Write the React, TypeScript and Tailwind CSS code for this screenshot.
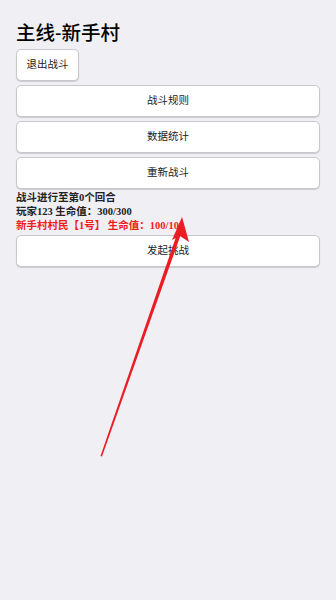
import React from "react";

const btn =
  "h-[32px] rounded-[5px] border border-[#c8c8cc] bg-white text-[10.5px] text-[#222] shadow-[0_1px_1px_rgba(0,0,0,0.15)]";

export default function App() {
  const font = { fontFamily: '"Liberation Serif", "Noto Sans CJK SC", serif' };
  return (
    <div className="relative min-h-[600px] w-full bg-[#efeff4] px-[16px] pt-[20px]" style={font}>
      <h1
        className="text-[19.5px] font-medium leading-[26px] text-black"
        style={{ fontFamily: '"Liberation Sans", "Noto Sans CJK SC", sans-serif' }}
      >
        主线-新手村
      </h1>
      <div className="mt-[3px] flex flex-col gap-[4px]">
        <button className={`${btn} w-[63px]`}>退出战斗</button>
        <button className={`${btn} w-full`}>战斗规则</button>
        <button className={`${btn} w-full`}>数据统计</button>
        <button className={`${btn} w-full`}>重新战斗</button>
      </div>
      <div className="mt-[2px] text-[10.5px] font-bold leading-[14px]">
        <p className="text-[#222]">战斗进行至第0个回合</p>
        <p className="text-[#222]">玩家123 生命值：300/300</p>
        <p className="text-[#f21c1c]">新手村村民【1号】 生命值：100/100</p>
      </div>
      <button className={`${btn} mt-[2px] w-full`}>发起挑战</button>

      <svg className="pointer-events-none absolute left-0 top-0" width="336" height="600">
        <polygon points="100.5,456 177,234 180.5,235.5 102,456.5" fill="#ec1c24" />
        <polygon points="182,217 189,242 180,236 172,240" fill="#ec1c24" />
      </svg>
    </div>
  );
}
